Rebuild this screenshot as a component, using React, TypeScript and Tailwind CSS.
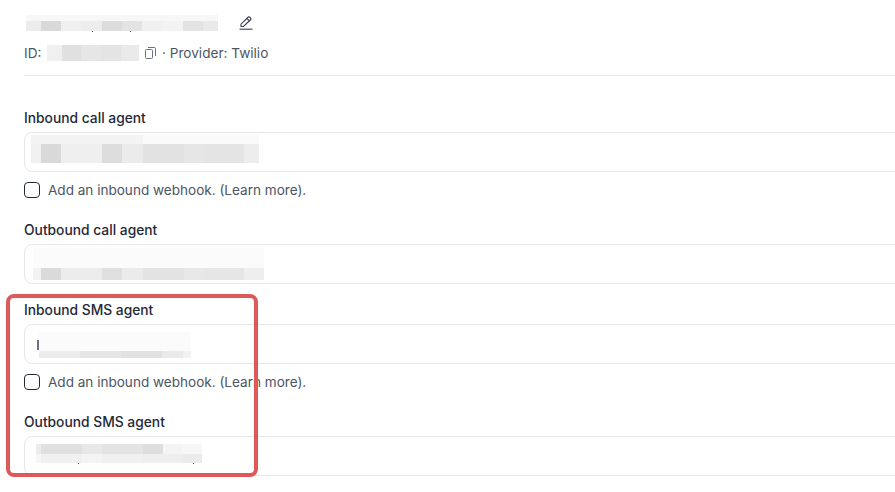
import React from 'react';

type Row = { h: number; cells: [number, string][] };

// pixelated redaction patches, drawn as cells of grey
function Mosaic({ width, rows, specks = [], className = '' }: { width: number; rows: Row[]; specks?: [number, number][]; className?: string }) {
  const height = rows.reduce((sum, r) => sum + r.h, 0);
  let y = 0;
  return (
    <svg width={width} height={height + 1} viewBox={`0 0 ${width} ${height + 1}`} className={`shrink-0 ${className}`} shapeRendering="crispEdges">
      {rows.map((row, i) => {
        const top = y;
        y += row.h;
        let x = 0;
        return (
          <g key={i}>
            {row.cells.map(([w, fill], j) => {
              const left = x;
              x += w;
              return <rect key={j} x={left} y={top} width={w} height={row.h} fill={fill} />;
            })}
          </g>
        );
      })}
      {specks.map(([sx, sy], i) => (
        <rect key={i} x={sx} y={sy} width="1" height="1" fill="#374151" />
      ))}
    </svg>
  );
}

const titlePatch: Row[] = [
  { h: 6, cells: [[192, '#f7f7f7']] },
  { h: 10, cells: [[15, '#ececec'], [20, '#d9d9d9'], [20, '#efefef'], [21, '#ededed'], [20, '#dcdcdc'], [20, '#e3e3e3'], [21, '#f0f0f0'], [20, '#f3f3f3'], [20, '#e3e3e3'], [15, '#e9e9e9']] },
];
const idPatch: Row[] = [
  { h: 16, cells: [[15, '#f0f0f0'], [19, '#e0e0e0'], [20, '#e6e6e6'], [20, '#e4e4e4'], [18, '#eaeaea']] },
];
const callInPatch: Row[] = [
  { h: 9, cells: [[112, '#f3f3f3'], [116, '#fafafa']] },
  { h: 19, cells: [[10, '#f0f0f0'], [20, '#d9d9d9'], [41, '#efefef'], [20, '#dddddd'], [21, '#ebebeb'], [41, '#e2e2e2'], [20, '#e6e6e6'], [40, '#e4e4e4'], [15, '#ededed']] },
];
const callOutPatch: Row[] = [
  { h: 21, cells: [[231, '#fbfbfb']] },
  { h: 12, cells: [[8, '#f2f2f2'], [20, '#dadada'], [41, '#ececec'], [20, '#e0e0e0'], [21, '#ebebeb'], [41, '#e3e3e3'], [20, '#e8e8e8'], [40, '#e6e6e6'], [20, '#eeeeee']] },
];
const smsInPatch: Row[] = [
  { h: 19, cells: [[152, '#fbfbfb']] },
  { h: 7, cells: [[41, '#ececec'], [41, '#e6e6e6'], [41, '#e2e2e2'], [21, '#eaeaea'], [8, '#f2f2f2']] },
];
const smsOutPatch: Row[] = [
  { h: 10, cells: [[5, '#ececec'], [41, '#e0e0e0'], [20, '#e8e8e8'], [41, '#e4e4e4'], [20, '#dedede'], [20, '#f4f4f4'], [19, '#f7f7f7']] },
  { h: 9, cells: [[5, '#f6f6f6'], [41, '#f0f0f0'], [20, '#f4f4f4'], [41, '#f0f0f0'], [40, '#eeeeee'], [19, '#ebebeb']] },
];

function Field({ label, children }: { label: string; children: React.ReactNode }) {
  return (
    <div>
      <div className="h-[22px] text-[13.8px] leading-[22px] font-[450] text-[#1f2937]">{label}</div>
      <div className="mt-[3px] h-10 w-[1000px] rounded-lg border border-[#e5e7eb] bg-white">{children}</div>
    </div>
  );
}

function WebhookCheck() {
  return (
    <label className="mt-[10px] flex h-4 items-center gap-2 text-[13.55px] text-[#4b5563]">
      <span className="h-4 w-4 shrink-0 rounded-[4px] border border-[#1f2937] bg-white" />
      <span>Add an inbound webhook. (Learn more).</span>
    </label>
  );
}

export default function App() {
  return (
    <div className="relative h-[492px] w-[895px] overflow-hidden bg-white pl-6 font-['Inter','Liberation_Sans',sans-serif]">
      {/* Number header */}
      <div className="flex h-[45px] items-start pt-[15px]">
        <Mosaic width={192} rows={titlePatch} specks={[[66, 16], [104, 16]]} className="ml-[2px]" />
        <svg width="14" height="14" viewBox="0 0 14 14" fill="none" stroke="#374151" strokeWidth="1.1" className="mt-px ml-[21px]">
          <path d="M2 10.5 L2 8.2 L9.3 1 Q9.9 0.5 10.5 1 L11.8 2.3 Q12.3 2.9 11.8 3.5 L4.5 10.5 Z" />
          <path d="M8 2.5 L10.4 4.9" />
          <path d="M0.5 13.2 L13.5 13.2" />
        </svg>
      </div>
      <div className="flex h-4 items-center text-[13.6px] text-[#4b5563]">
        <span className="w-[23px]">ID:</span>
        <Mosaic width={92} rows={idPatch} />
        <svg width="11" height="12" viewBox="0 0 11 12" fill="none" stroke="#6b7280" strokeWidth="1" className="ml-[6px]">
          <rect x="0.5" y="2.5" width="7" height="9" rx="1" />
          <path d="M3 0.5 H9.5 Q10.5 0.5 10.5 1.5 V9" />
        </svg>
        <span className="ml-[6px]">· Provider: Twilio</span>
      </div>
      <div className="mt-[14px] h-px w-[1000px] bg-[#e5e7eb]" />

      {/* Agent fields */}
      <div className="mt-[31px]">
        <Field label="Inbound call agent">
          <Mosaic width={228} rows={callInPatch} className="mt-[2px] ml-[6px]" />
        </Field>
        <WebhookCheck />
      </div>
      <div className="mt-[21px]">
        <Field label="Outbound call agent">
          <Mosaic width={231} rows={callOutPatch} className="mt-[2px] ml-2" />
        </Field>
      </div>
      <div className="mt-[15px]">
        <Field label="Inbound SMS agent">
          <div className="flex items-start">
            <span className="mt-[15px] ml-[12px] h-[10px] w-[2px] bg-[#6b7280]" />
            <Mosaic width={152} rows={smsInPatch} className="mt-[7px]" />
          </div>
        </Field>
        <WebhookCheck />
      </div>
      <div className="mt-[21px]">
        <Field label="Outbound SMS agent">
          <Mosaic width={166} rows={smsOutPatch} specks={[[42, 19], [157, 19]]} className="mt-[7px] ml-[11px]" />
        </Field>
      </div>

      {/* Highlight drawn over the screenshot */}
      <div className="absolute top-[294px] left-[6px] h-[183px] w-[252px] rounded-lg border-[4px] border-[#dc5a58]" />
    </div>
  );
}
